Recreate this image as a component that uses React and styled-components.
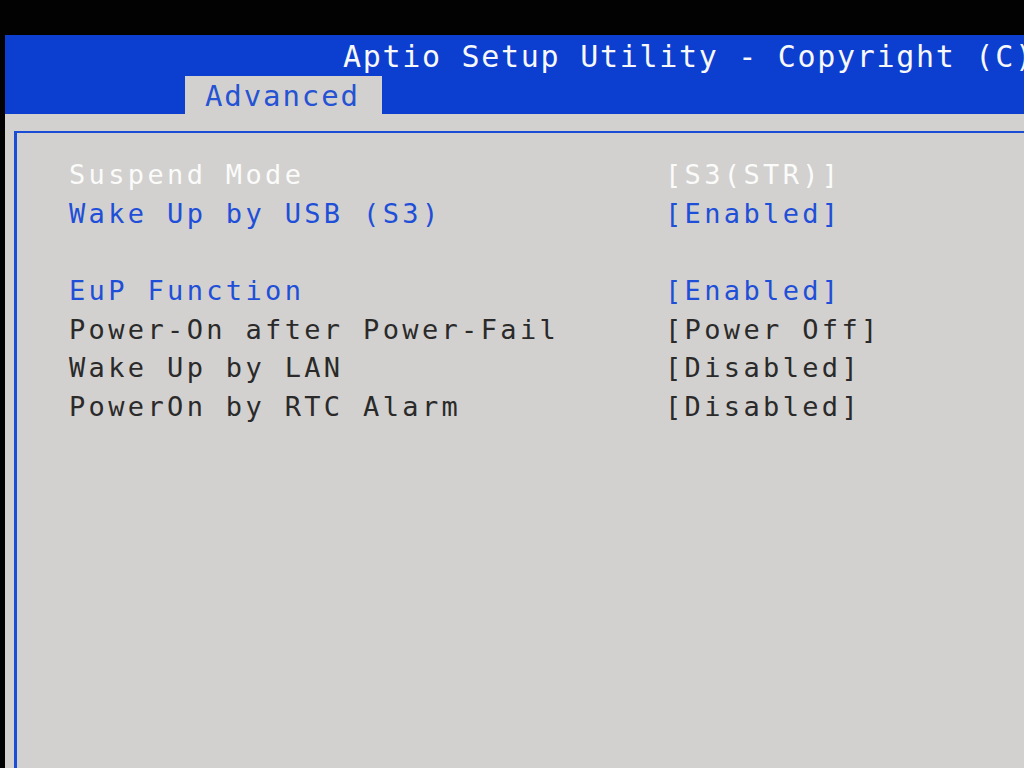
import React from "react";
import styled, { createGlobalStyle } from "styled-components";

const GlobalStyle = createGlobalStyle`
  html, body { margin: 0; padding: 0; background: #000; }
  #root { width: 1024px; height: 768px; }
`;

const Screen = styled.div`
  width: 1024px;
  height: 768px;
  overflow: hidden;
  background: #020202;
  box-sizing: border-box;
  padding: 35px 0 0 5px;
  display: flex;
  flex-direction: column;
  font-family: "DejaVu Sans Mono", "Liberation Mono", monospace;
`;

const Header = styled.header`
  background: #0c3ecf;
  height: 79px;
  box-sizing: border-box;
  padding-top: 3px;
  display: flex;
  flex-direction: column;
  flex-shrink: 0;
`;

const Title = styled.div`
  height: 38px;
  line-height: 38px;
  padding-left: 338px;
  color: #f7f8fb;
  font-size: 30px;
  letter-spacing: 1.7px;
  white-space: nowrap;
  overflow: hidden;
`;

const TabRow = styled.nav`
  display: flex;
  padding-left: 180px;
`;

const Tab = styled.div`
  width: 197px;
  height: 38px;
  box-sizing: border-box;
  padding: 2px 0 0 20px;
  line-height: 36px;
  background: #d2d1cf;
  color: #2553d4;
  font-size: 29px;
  letter-spacing: 1.9px;
`;

const Body = styled.main`
  flex: 1;
  background: #d2d1cf;
  padding: 17px 0 0 9px;
  display: flex;
`;

const Panel = styled.section`
  flex: 1;
  border-top: 2px solid #1b4cd6;
  border-left: 3px solid #1b4cd6;
  padding: 23px 0 0 52px;
  display: flex;
  flex-direction: column;
`;

const colors = {
  selected: "#fbfbfa",
  active: "#1f4fd8",
  normal: "#2b2a2a",
};

const Row = styled.div`
  display: grid;
  grid-template-columns: 596px auto;
  height: 38.7px;
  line-height: 38.7px;
  font-size: 27px;
  letter-spacing: 3.35px;
  white-space: nowrap;
  color: ${(p) => colors[p.$kind] || colors.normal};
`;

const Label = styled.span``;
const Value = styled.span``;

const items = [
  { label: "Suspend Mode", value: "[S3(STR)]", kind: "selected" },
  { label: "Wake Up by USB (S3)", value: "[Enabled]", kind: "active" },
  { label: "", value: "", kind: "normal" },
  { label: "EuP Function", value: "[Enabled]", kind: "active" },
  { label: "Power-On after Power-Fail", value: "[Power Off]", kind: "normal" },
  { label: "Wake Up by LAN", value: "[Disabled]", kind: "normal" },
  { label: "PowerOn by RTC Alarm", value: "[Disabled]", kind: "normal" },
];

export default function App() {
  return (
    <>
      <GlobalStyle />
      <Screen>
        <Header>
          <Title>Aptio Setup Utility - Copyright (C) 2012 American Megatrends, Inc.</Title>
          <TabRow>
            <Tab>Advanced</Tab>
          </TabRow>
        </Header>
        <Body>
          <Panel>
            {items.map((it, i) => (
              <Row key={i} $kind={it.kind}>
                <Label>{it.label}</Label>
                <Value>{it.value}</Value>
              </Row>
            ))}
          </Panel>
        </Body>
      </Screen>
    </>
  );
}
